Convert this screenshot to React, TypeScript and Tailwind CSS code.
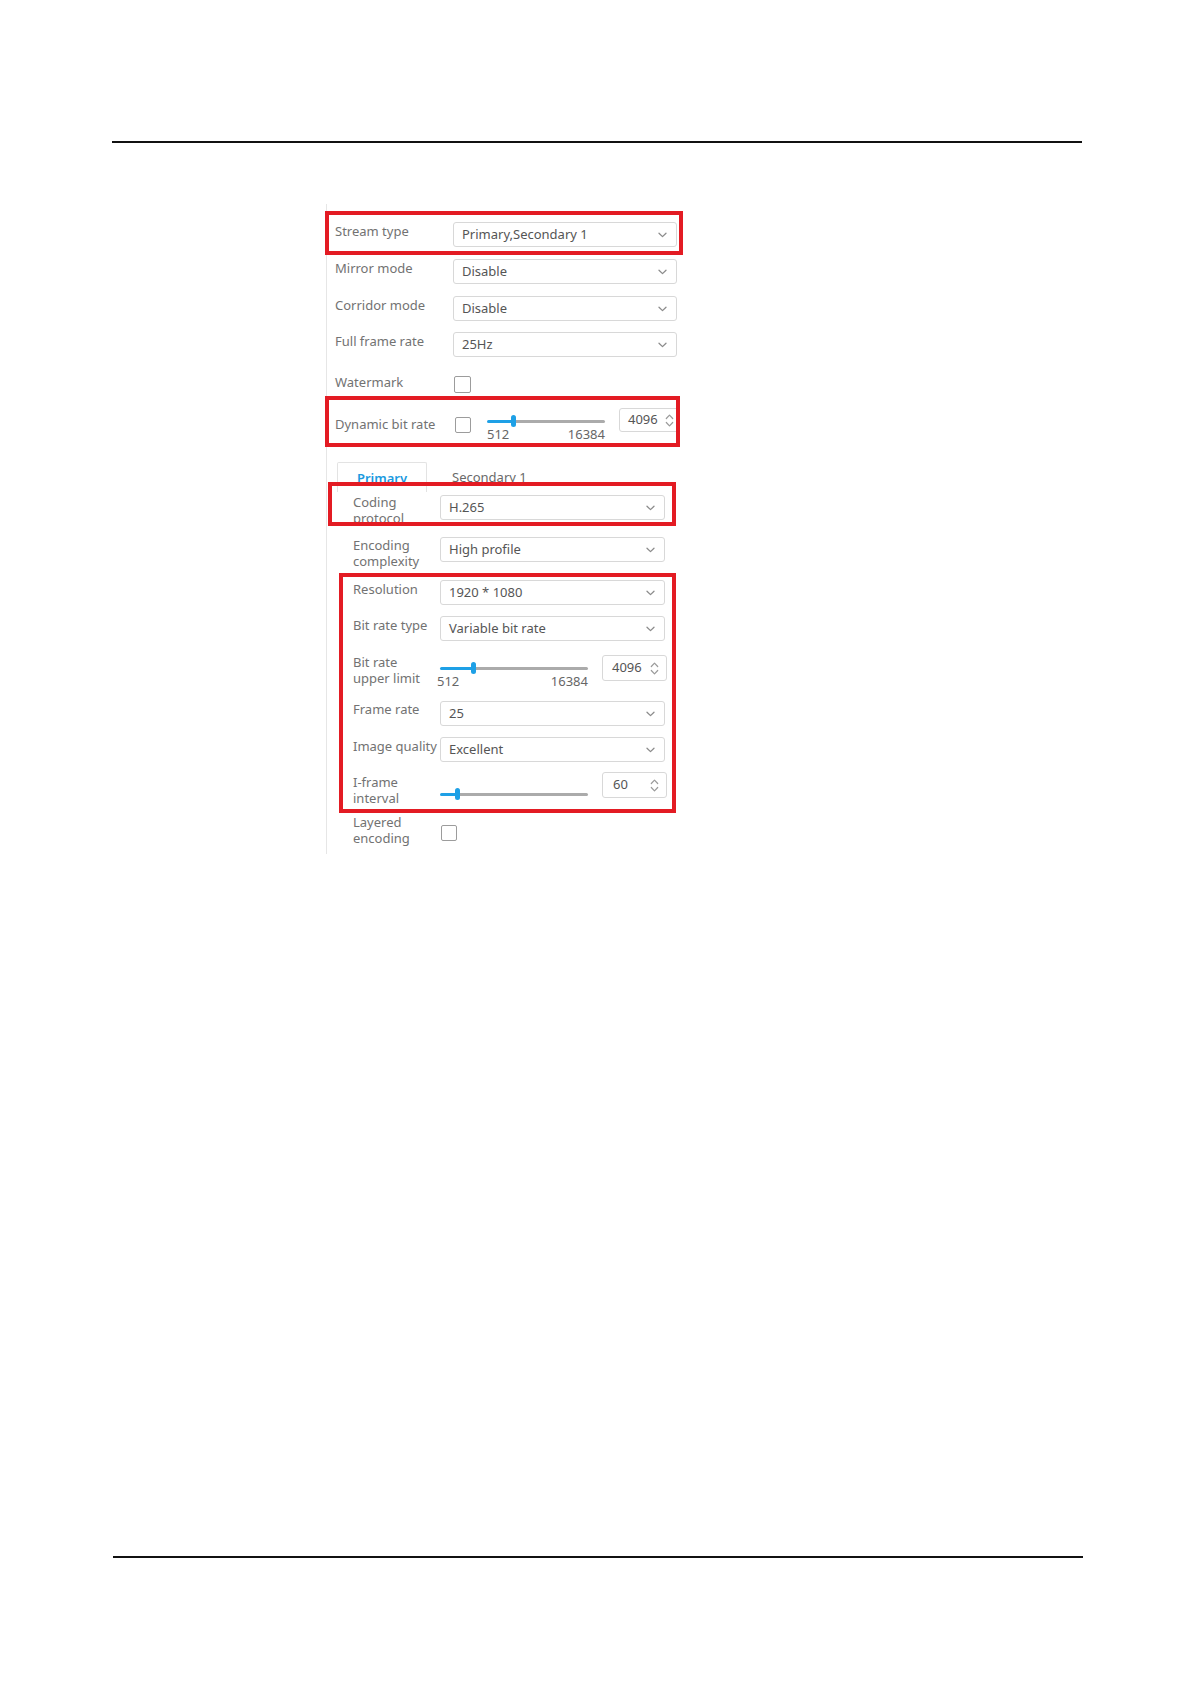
import React from "react";

const LABEL = "text-[13px] leading-[16px] text-[#727272]";

function Chevron() {
  return (
    <svg width="9" height="6" viewBox="0 0 9 6" className="shrink-0">
      <path d="M1 1.2l3.5 3.4L8 1.2" stroke="#8c8c8c" strokeWidth="1.3" fill="none" strokeLinecap="round" strokeLinejoin="round" />
    </svg>
  );
}

function Spinner() {
  return (
    <svg width="9" height="15" viewBox="0 0 9 15" className="shrink-0">
      <path d="M1.3 5.5L4.5 2.2l3.2 3.3M1.3 9.5l3.2 3.3 3.2-3.3" stroke="#9a9a9a" strokeWidth="1.2" fill="none" strokeLinecap="round" strokeLinejoin="round" />
    </svg>
  );
}

function RedBox({ className }: { className: string }) {
  return <div className={"pointer-events-none absolute border-4 border-[#e31b23] " + className} />;
}

function SelectTop({ value }: { value: string }) {
  return (
    <div className="flex h-[25px] w-[224px] items-center justify-between rounded-[3px] border border-[#d8d8d8] bg-white pl-[8px] pr-[9px] text-[13px] text-[#555]">
      <span>{value}</span>
      <Chevron />
    </div>
  );
}

function SelectTab({ value }: { value: string }) {
  return (
    <div className="flex h-[25px] w-[225px] items-center justify-between rounded-[3px] border border-[#d8d8d8] bg-white pl-[8px] pr-[9px] text-[13px] text-[#555]">
      <span>{value}</span>
      <Chevron />
    </div>
  );
}

function Checkbox() {
  return <div className="h-[16px] w-[16px] rounded-[2px] border-[1.5px] border-[#9c9c9c] bg-white" />;
}

export default function App() {
  return (
    <div className="h-[1684px] w-[1191px] bg-white font-['Noto_Sans',sans-serif]">
      <div className="h-[141px]" />
      <div className="ml-[112px] h-[2px] w-[970px] bg-[#111]" />
      <div className="h-[1413px] pt-[61px]">
        {/* panel */}
        <div className="ml-[326px] w-[360px] border-l border-[#e6e6e6] pb-[8px] pt-[18px]">
          {/* Stream type */}
          <div className="relative flex items-start pl-[8px]">
            <div className={"w-[118px] pt-[1px] " + LABEL}>Stream type</div>
            <SelectTop value="Primary,Secondary 1" />
            <RedBox className="left-[-2px] top-[-11px] h-[44px] w-[358px]" />
          </div>
          <div className="mt-[12px] flex items-start pl-[8px]">
            <div className={"w-[118px] pt-[1px] " + LABEL}>Mirror mode</div>
            <SelectTop value="Disable" />
          </div>
          <div className="mt-[12px] flex items-start pl-[8px]">
            <div className={"w-[118px] pt-[1px] " + LABEL}>Corridor mode</div>
            <SelectTop value="Disable" />
          </div>
          <div className="mt-[11px] flex items-start pl-[8px]">
            <div className={"w-[118px] pt-[1px] " + LABEL}>Full frame rate</div>
            <SelectTop value="25Hz" />
          </div>
          {/* Watermark */}
          <div className="mt-[19px] flex items-start pl-[8px]">
            <div className={"-mt-[2px] w-[118px] " + LABEL}>Watermark</div>
            <div className="ml-[1px]">
              <div className="h-[17px] w-[17px] rounded-[2px] border-[1.5px] border-[#9c9c9c] bg-white" />
            </div>
          </div>
          {/* Dynamic bit rate */}
          <div className="relative mt-[15px] flex items-start pl-[8px]">
            <div className={"w-[118px] whitespace-nowrap pt-[8px] " + LABEL}>Dynamic bit rate</div>
            <div className="ml-[2px] mt-[9px]">
              <Checkbox />
            </div>
            <div className="ml-[16px] mt-[7px] w-[118px]">
              <div className="relative h-[12px]">
                <div className="flex pt-[5px]">
                  <div className="h-[3px] w-[26px] rounded-l-full bg-[#1ea0e6]" />
                  <div className="h-[3px] flex-1 rounded-r-full bg-[#ababab]" />
                </div>
                <div className="absolute left-[24px] top-0 h-[12px] w-[5px] rounded-full bg-[#1ea0e6]" />
              </div>
              <div className="flex justify-between text-[13px] leading-[15px] text-[#666]">
                <span>512</span>
                <span>16384</span>
              </div>
            </div>
            <div className="ml-[14px] flex h-[24px] w-[60px] items-center justify-between rounded-[3px] border border-[#d8d8d8] bg-white pl-[8px] pr-[4px] text-[13px] text-[#555]">
              <span>4096</span>
              <Spinner />
            </div>
            <RedBox className="left-[-2px] top-[-12px] h-[51px] w-[355px]" />
          </div>
          {/* Tabs */}
          <div className="mt-[20px] flex items-start pl-[10px]">
            <div className="h-[30px] w-[90px] rounded-t-[2px] border border-b-0 border-[#e3e3e3] pt-[7px] text-center text-[13px] font-semibold leading-[16px] text-[#1a9ae0]">
              Primary
            </div>
            <div className="ml-[25px] h-[30px] pt-[7px] text-[13px] leading-[16px] text-[#6a6a6a]">Secondary 1</div>
          </div>
          {/* Tab content */}
          <div className="pl-[26px]">
            <div className="relative mt-[3px] flex items-start">
              <div className={"-mt-[1px] w-[87px] " + LABEL}>
                Coding
                <br />
                protocol
              </div>
              <SelectTab value="H.265" />
              <RedBox className="left-[-25px] top-[-13px] h-[44px] w-[348px]" />
            </div>
            <div className="mt-[11px] flex items-start">
              <div className={"w-[87px] " + LABEL}>
                Encoding
                <br />
                complexity
              </div>
              <SelectTab value="High profile" />
            </div>
            <div className="relative mt-[11px]">
              <div className="flex items-start">
                <div className={"w-[87px] pt-[1px] " + LABEL}>Resolution</div>
                <SelectTab value="1920 * 1080" />
              </div>
              <div className="mt-[11px] flex items-start">
                <div className={"w-[87px] pt-[1px] " + LABEL}>Bit rate type</div>
                <SelectTab value="Variable bit rate" />
              </div>
              <div className="mt-[14px] flex items-start">
                <div className={"-mt-[1px] w-[87px] " + LABEL}>
                  Bit rate
                  <br />
                  upper limit
                </div>
                <div className="mt-[7px] w-[148px]">
                  <div className="relative h-[12px]">
                    <div className="flex pt-[5px]">
                      <div className="h-[3px] w-[33px] rounded-l-full bg-[#1ea0e6]" />
                      <div className="h-[3px] flex-1 rounded-r-full bg-[#ababab]" />
                    </div>
                    <div className="absolute left-[31px] top-0 h-[12px] w-[5px] rounded-full bg-[#1ea0e6]" />
                  </div>
                  <div className="-ml-[3px] flex justify-between text-[13px] leading-[15px] text-[#666]">
                    <span>512</span>
                    <span>16384</span>
                  </div>
                </div>
                <div className="ml-[14px] flex h-[26px] w-[65px] items-center justify-between rounded-[3px] border border-[#d8d8d8] bg-white pl-[9px] pr-[7px] text-[13px] text-[#555]">
                  <span>4096</span>
                  <Spinner />
                </div>
              </div>
              <div className="mt-[12px] flex items-start">
                <div className={"w-[87px] " + LABEL}>Frame rate</div>
                <SelectTab value="25" />
              </div>
              <div className="mt-[11px] flex items-start">
                <div className={"w-[87px] whitespace-nowrap pt-[1px] " + LABEL}>Image quality</div>
                <SelectTab value="Excellent" />
              </div>
              <div className="mt-[10px] flex items-start">
                <div className={"w-[87px] pt-[2px] " + LABEL}>
                  I-frame
                  <br />
                  interval
                </div>
                <div className="mt-[16px] w-[148px]">
                  <div className="relative h-[12px]">
                    <div className="flex pt-[5px]">
                      <div className="h-[3px] w-[17px] rounded-l-full bg-[#1ea0e6]" />
                      <div className="h-[3px] flex-1 rounded-r-full bg-[#ababab]" />
                    </div>
                    <div className="absolute left-[15px] top-0 h-[12px] w-[5px] rounded-full bg-[#1ea0e6]" />
                  </div>
                </div>
                <div className="ml-[14px] flex h-[26px] w-[65px] items-center justify-between rounded-[3px] border border-[#d8d8d8] bg-white pl-[10px] pr-[7px] text-[13px] text-[#555]">
                  <span>60</span>
                  <Spinner />
                </div>
              </div>
              <RedBox className="left-[-14px] top-[-7px] h-[240px] w-[337px]" />
            </div>
            <div className="mt-[8px] flex items-start">
              <div className={"w-[87px] " + LABEL}>
                Layered
                <br />
                encoding
              </div>
              <div className="ml-[1px] mt-[11px]">
                <Checkbox />
              </div>
            </div>
          </div>
        </div>
      </div>
      <div className="ml-[113px] h-[2px] w-[970px] bg-[#111]" />
    </div>
  );
}
